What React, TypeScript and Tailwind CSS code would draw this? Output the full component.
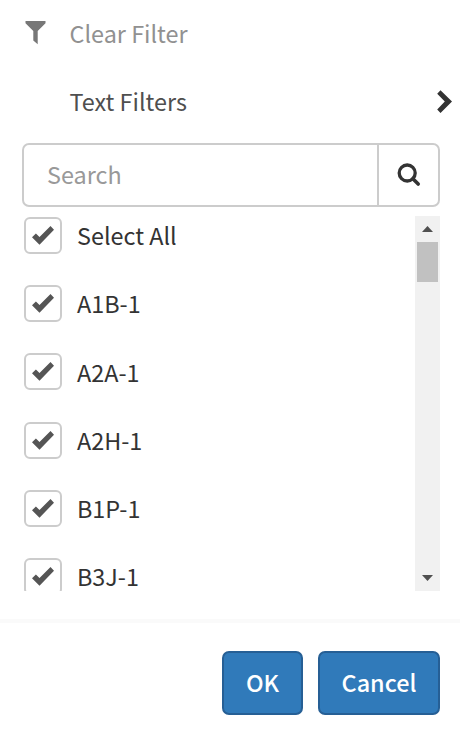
import { useState } from "react";

const ITEMS = ["Select All", "A1B-1", "A2A-1", "A2H-1", "B1P-1", "B3J-1"];

const IconFilter = () => (
  <svg width="21" height="24" viewBox="0 0 21 24" fill="#777777">
    <path d="M.5 0h20v2.2L12.7 10v13.2L8.3 19.500V10L.5 2.200z" />
  </svg>
);

const IconChevron = () => (
  <svg width="16" height="24" viewBox="0 0 16 24" fill="#333333">
    <path d="M4.500.2L16 11.600 4.500 22.900 1.200 19.500l7.600-7.900L1.200 3.700z" />
  </svg>
);

const IconSearch = () => (
  <svg width="24" height="24" viewBox="0 0 24 24" fill="none" stroke="#333333">
    <circle cx="10.200" cy="10" r="8" strokeWidth="3.300" />
    <path d="M15.900 15.700l5.300 5.300" strokeWidth="3.600" strokeLinecap="round" />
  </svg>
);

const IconCheck = () => (
  <svg width="22" height="19" viewBox="0 0 22 19" fill="#555555">
    <path d="M18.500 0l3.500 3.700L7.500 18.700 0 11.300l3.900-3.900 3.600 3.600z" />
  </svg>
);

const App = () => {
  const [checked, setChecked] = useState(ITEMS.map(() => true));
  const [search, setSearch] = useState("");

  const toggle = (i: number) => {
    setChecked((prev) =>
      i === 0 ? prev.map(() => !prev[0]) : prev.map((c, n) => (n === i ? !c : c)),
    );
  };

  return (
    <div className="h-[738px] w-[460px] overflow-hidden bg-white font-['Noto_Sans_CJK_SC',sans-serif] text-[23.400px] leading-[36px] text-[#333333]">
      {/* Filter menu */}
      <button className="flex h-[68px] w-full items-start pl-[25px] text-left text-[#919191]">
        <span className="mt-[21px] w-[44.500px]">
          <IconFilter />
        </span>
        <span className="mt-[15px]">Clear Filter</span>
      </button>
      <button className="flex h-[75px] w-full items-start justify-between pl-[69.500px] pr-2 text-left text-[#4f4f4f]">
        <span className="mt-[15px]">Text Filters</span>
        <span className="mt-[22px]">
          <IconChevron />
        </span>
      </button>

      {/* Search */}
      <div className="ml-[22px] flex h-16 w-[418px] rounded-[7px] border-2 border-[#cccccc]">
        <input
          value={search}
          onChange={(e) => setSearch(e.target.value)}
          placeholder="Search"
          className="w-[353px] pb-[3px] pl-[23px] outline-none placeholder:text-[#999999]"
        />
        <button className="flex flex-1 items-center justify-center border-l-2 border-[#cccccc]">
          <IconSearch />
        </button>
      </div>

      {/* Values */}
      <div className="ml-6 mt-[9px] flex h-[375px] w-[416px] justify-between overflow-hidden">
        <div className="pt-px">
          {ITEMS.map((item, i) => (
            <div
              key={item}
              onClick={() => toggle(i)}
              className="flex h-[68.2px] cursor-pointer items-start gap-[15px]"
            >
              <span className="flex h-[37px] w-[38px] items-center justify-center rounded-[6px] border-2 border-[#cccccc]">
                {checked[i] && <IconCheck />}
              </span>
              <span className="mt-[0.2px]">{item}</span>
            </div>
          ))}
        </div>
        <div className="flex w-[25px] flex-col items-center justify-between bg-[#f1f1f1]">
          <div className="flex flex-col items-center">
            <svg className="mt-[10px] mb-[10px]" width="11" height="6" viewBox="0 0 11 6" fill="#505050">
              <path d="M5.500 0L11 6H0z" />
            </svg>
            <div className="h-10 w-[21px] bg-[#c1c1c1]" />
          </div>
          <svg className="mb-[10px]" width="11" height="6" viewBox="0 0 11 6" fill="#505050">
            <path d="M0 0h11L5.500 6z" />
          </svg>
        </div>
      </div>

      {/* Footer */}
      <div className="mt-7 flex justify-end gap-[15px] border-t-4 border-[#fafafa] pr-5 pt-7 font-medium text-white">
        <button className="h-16 w-[81px] rounded-[7px] border-2 border-[#265f95] bg-[#307aba] pb-[2px]">
          OK
        </button>
        <button className="h-16 w-[122px] rounded-[7px] border-2 border-[#265f95] bg-[#307aba] pb-[2px]">
          Cancel
        </button>
      </div>
    </div>
  );
};
export default App;
